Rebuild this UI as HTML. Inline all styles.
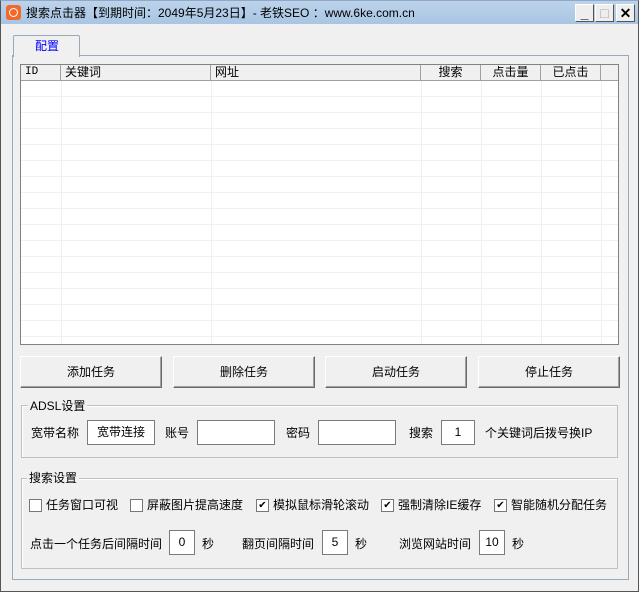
<!DOCTYPE html>
<html><head><meta charset="utf-8"><style>
*{margin:0;padding:0;box-sizing:border-box}
body{width:639px;height:592px;background:#f0f0f0;font-family:"Liberation Sans","Noto Sans CJK SC","WenQuanYi Zen Hei",sans-serif;font-size:12px;line-height:14px;color:#000;position:relative;overflow:hidden}
.a{position:absolute}
.win{left:0;top:0;width:639px;height:592px;border:1px solid #555;border-top:1px solid #8fa8c8}
.title{left:1px;top:1px;width:637px;height:23px;background:linear-gradient(#bcd3ea,#a9c5e4)}
.tbtn{top:4px;width:19px;height:18px;background:#eee;border:1px solid #fff;border-right-color:#555;border-bottom-color:#555;text-align:center;font-size:14px;line-height:16px;font-weight:bold}
.list{left:20px;top:64px;width:599px;height:281px;background:#fff;border:1px solid #828282;overflow:hidden}
.hdr{top:0;height:16px;background:#f0f0f0;border-right:1px solid #a0a0a0;border-bottom:1px solid #a0a0a0;font-size:12px;line-height:15px}
.vl{top:16px;width:1px;height:270px;background:#f0f0f0}
.hl{left:0;width:599px;height:1px;background:#f0f0f0}
.btn{top:356px;height:32px;background:#f0f0f0;border:1px solid #fff;border-right:1px solid #6a6a6a;border-bottom:1px solid #6a6a6a;box-shadow:inset -1px -1px 0 #a0a0a0;text-align:center;line-height:30px}
.grp{border:1px solid #c0c0c0;box-shadow:1px 1px 0 #fff inset}
.gl{background:#f0f0f0;padding:0 2px}
.in{background:#fff;border:1px solid #7a7a7a;height:25px;text-align:center;line-height:23px}
.cb{width:13px;height:13px;background:#fff;border:1px solid #777;font-size:10px;line-height:11px;text-align:center}
</style></head><body>
<div class="a win"></div>
<div class="a title"></div>
<div class="a" style="left:6px;top:5px;width:15px;height:15px;background:#f26a2a;border-radius:3px"></div>
<div class="a" style="left:9px;top:8px;width:9px;height:9px;border:1.5px solid #fff;border-radius:50%"></div>
<div class="a" style="left:26px;top:6px;font-size:12px">搜索点击器【到期时间：2049年5月23日】- 老铁SEO ：www.6ke.com.cn</div>
<div class="a tbtn" style="left:575px">_</div>
<div class="a tbtn" style="left:595px;font-weight:normal;color:#aaa">□</div>
<div class="a tbtn" style="left:616px">✕</div>
<div class="a" style="left:12px;top:55px;width:617px;height:525px;border:1px solid #9aa9b8"></div>
<div class="a" style="left:13px;top:35px;width:67px;height:22px;border:1px solid #9aa9b8;border-bottom:none;background:#f0f0f0;border-radius:2px 2px 0 0"></div>
<div class="a" style="left:35px;top:39px;color:#0000ff">配置</div>
<div class="a list">
<div class="a hdr" style="left:0;width:40px;padding-left:4px;font-family:'Liberation Mono',monospace;font-size:11px">ID</div>
<div class="a hdr" style="left:40px;width:150px;padding-left:4px">关键词</div>
<div class="a hdr" style="left:190px;width:210px;padding-left:4px">网址</div>
<div class="a hdr" style="left:400px;width:60px;text-align:center">搜索</div>
<div class="a hdr" style="left:460px;width:60px;text-align:center">点击量</div>
<div class="a hdr" style="left:520px;width:60px;text-align:center">已点击</div>
<div class="a hdr" style="left:580px;width:19px;border-right:none"></div>
<div class="a vl" style="left:40px"></div><div class="a vl" style="left:190px"></div><div class="a vl" style="left:400px"></div><div class="a vl" style="left:460px"></div><div class="a vl" style="left:520px"></div><div class="a vl" style="left:580px"></div>
<div class="a hl" style="top:31px"></div><div class="a hl" style="top:47px"></div><div class="a hl" style="top:63px"></div><div class="a hl" style="top:79px"></div><div class="a hl" style="top:95px"></div><div class="a hl" style="top:111px"></div><div class="a hl" style="top:127px"></div><div class="a hl" style="top:143px"></div><div class="a hl" style="top:159px"></div><div class="a hl" style="top:175px"></div><div class="a hl" style="top:191px"></div><div class="a hl" style="top:207px"></div><div class="a hl" style="top:223px"></div><div class="a hl" style="top:239px"></div><div class="a hl" style="top:255px"></div><div class="a hl" style="top:271px"></div>
</div>
<div class="a btn" style="left:20px;width:142px">添加任务</div>
<div class="a btn" style="left:173px;width:142px">删除任务</div>
<div class="a btn" style="left:325px;width:142px">启动任务</div>
<div class="a btn" style="left:478px;width:142px">停止任务</div>
<div class="a grp" style="left:21px;top:405px;width:597px;height:53px"></div>
<div class="a gl" style="left:28px;top:399px">ADSL设置</div>
<div class="a" style="left:31px;top:426px">宽带名称</div>
<div class="a in" style="left:87px;top:420px;width:68px">宽带连接</div>
<div class="a" style="left:165px;top:426px">账号</div>
<div class="a in" style="left:197px;top:420px;width:78px"></div>
<div class="a" style="left:286px;top:426px">密码</div>
<div class="a in" style="left:318px;top:420px;width:78px"></div>
<div class="a" style="left:409px;top:426px">搜索</div>
<div class="a in" style="left:441px;top:420px;width:34px">1</div>
<div class="a" style="left:485px;top:426px">个关键词后拨号换IP</div>
<div class="a grp" style="left:21px;top:478px;width:597px;height:91px"></div>
<div class="a gl" style="left:27px;top:471px">搜索设置</div>
<div class="a cb" style="left:29px;top:499px"></div><div class="a" style="left:46px;top:498px">任务窗口可视</div>
<div class="a cb" style="left:130px;top:499px"></div><div class="a" style="left:147px;top:498px">屏蔽图片提高速度</div>
<div class="a cb" style="left:256px;top:499px">✔</div><div class="a" style="left:273px;top:498px">模拟鼠标滑轮滚动</div>
<div class="a cb" style="left:381px;top:499px">✔</div><div class="a" style="left:398px;top:498px">强制清除IE缓存</div>
<div class="a cb" style="left:494px;top:499px">✔</div><div class="a" style="left:511px;top:498px">智能随机分配任务</div>
<div class="a" style="left:30px;top:537px">点击一个任务后间隔时间</div>
<div class="a in" style="left:169px;top:530px;width:26px">0</div>
<div class="a" style="left:202px;top:537px">秒</div>
<div class="a" style="left:242px;top:537px">翻页间隔时间</div>
<div class="a in" style="left:322px;top:530px;width:26px">5</div>
<div class="a" style="left:355px;top:537px">秒</div>
<div class="a" style="left:399px;top:537px">浏览网站时间</div>
<div class="a in" style="left:479px;top:530px;width:26px">10</div>
<div class="a" style="left:512px;top:537px">秒</div>
</body></html>
